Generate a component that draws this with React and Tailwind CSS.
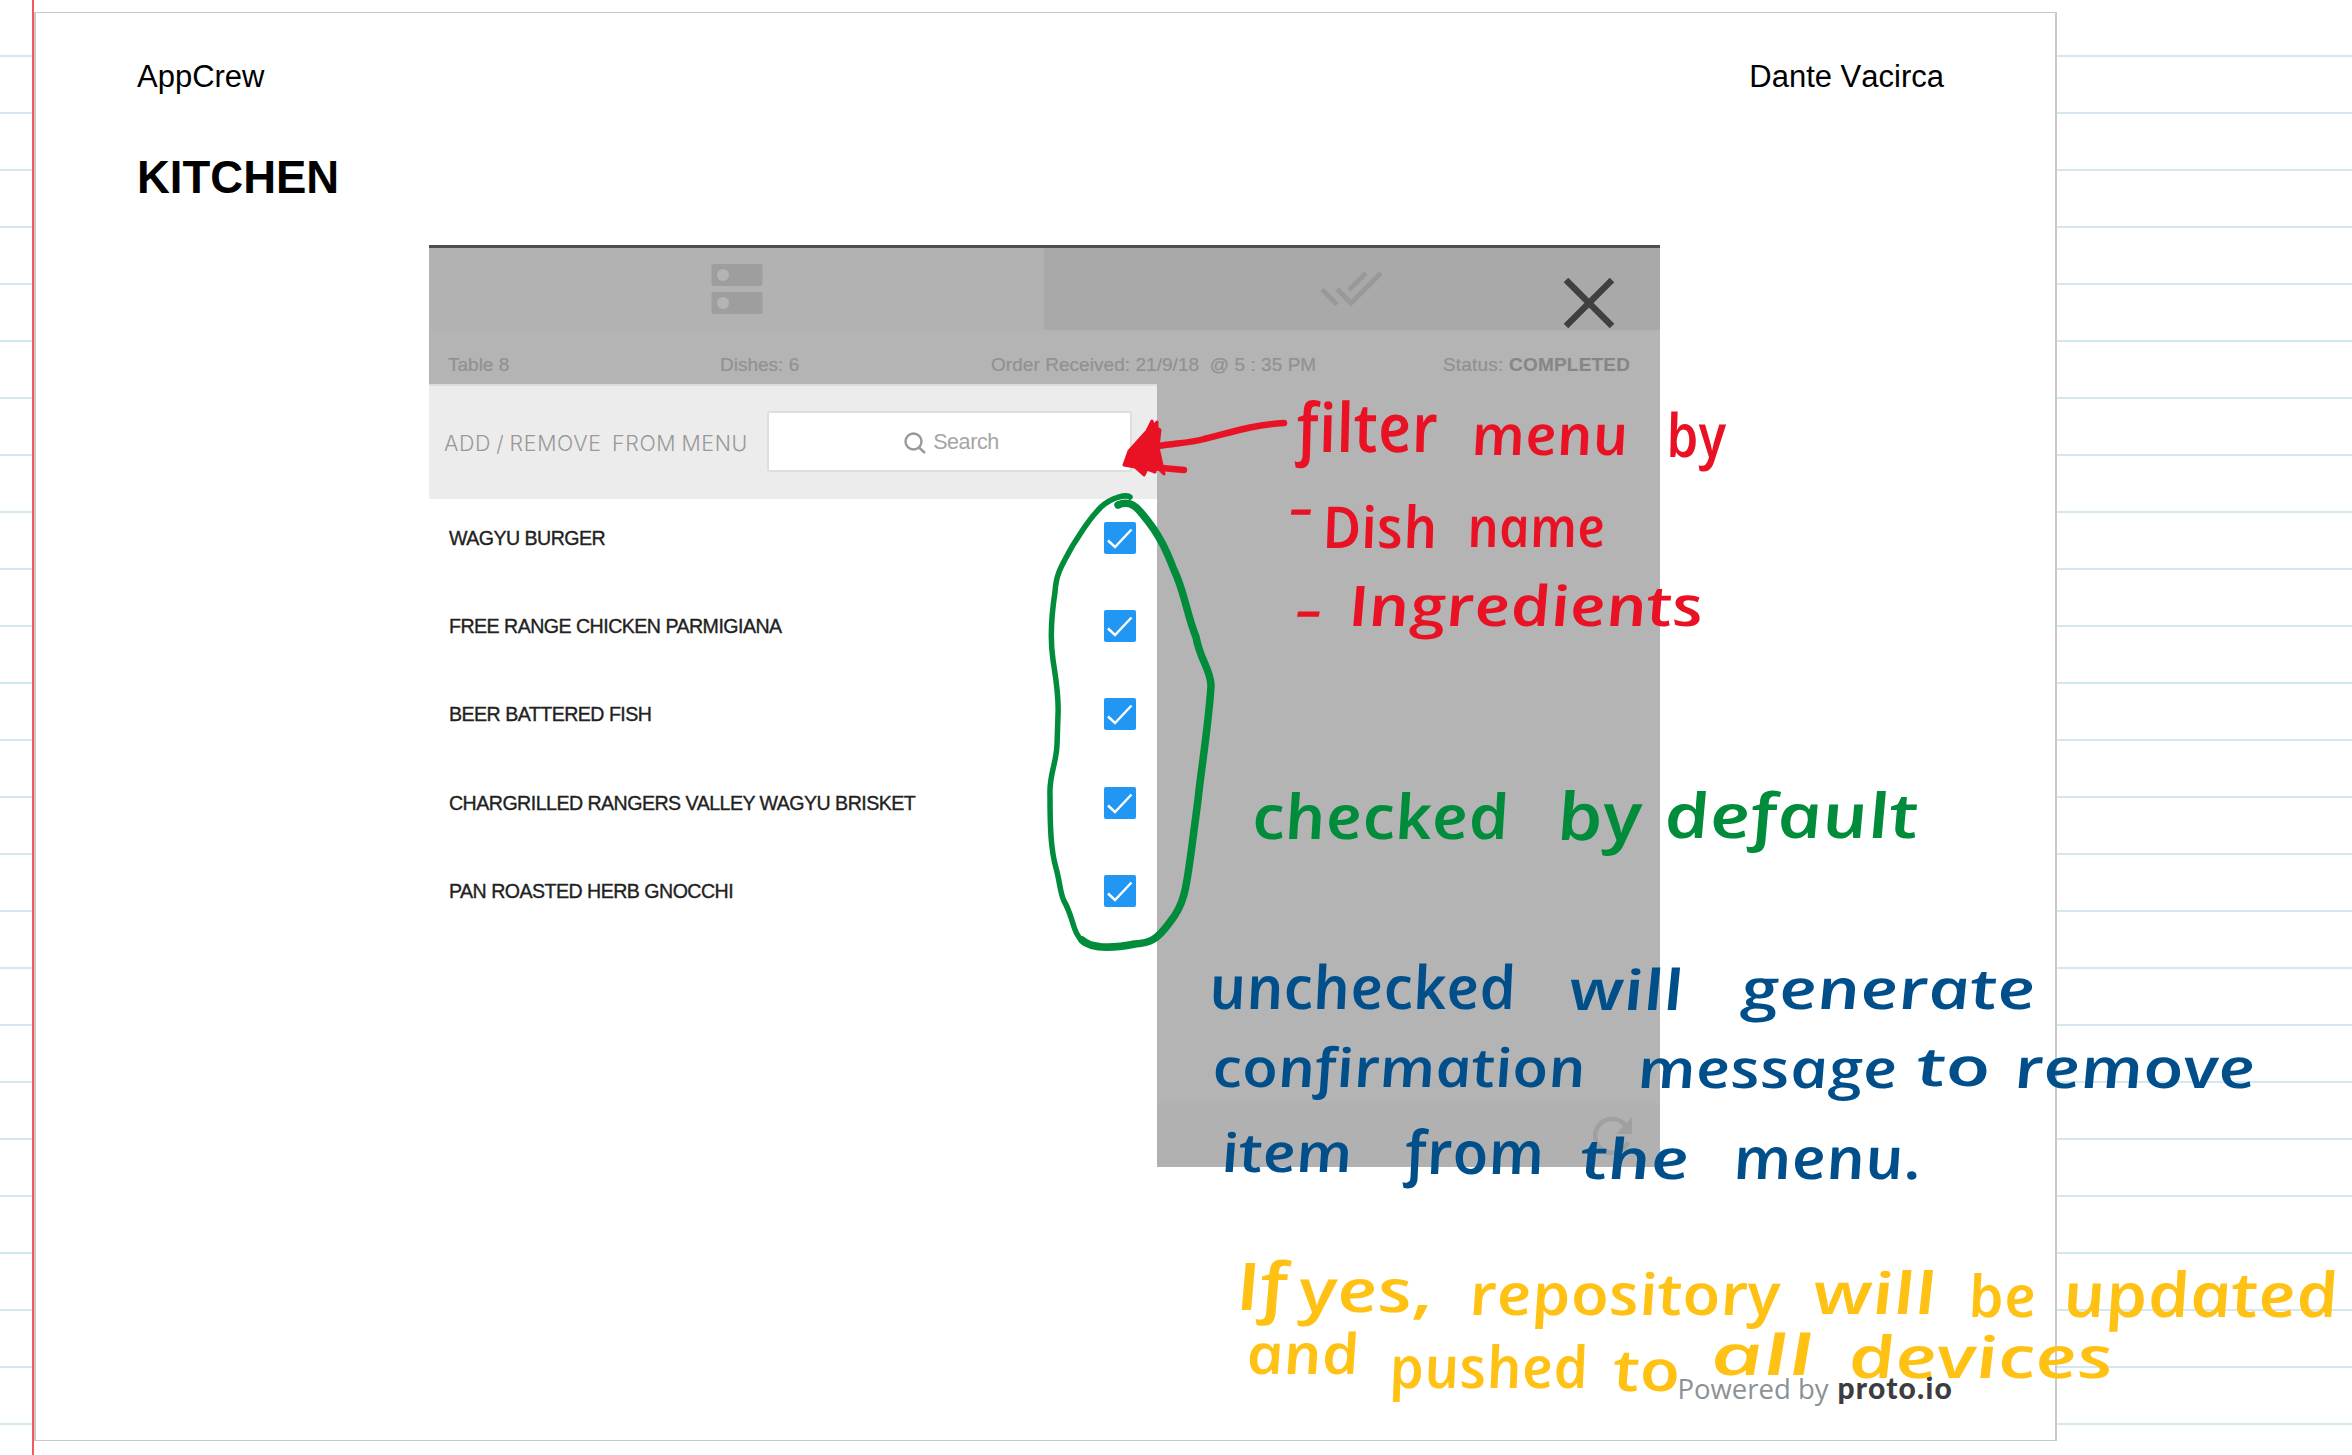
import React from "react";

const dishes = [
  "WAGYU BURGER",
  "FREE RANGE CHICKEN PARMIGIANA",
  "BEER BATTERED FISH",
  "CHARGRILLED RANGERS VALLEY WAGYU BRISKET",
  "PAN ROASTED HERB GNOCCHI",
];

// Handwritten words: [text, left, right, baseline, font size]
const notes = [
  {
    color: "#e81224",
    words: [
      ["filter", 1300, 1441, 452, 68],
      ["menu", 1474, 1631, 455, 56],
      ["by", 1669, 1729, 457, 60],
      ["-", 1291, 1316, 526, 52],
      ["Dish", 1325, 1440, 548, 58],
      ["name", 1470, 1608, 547, 56],
      ["-", 1297, 1325, 628, 52],
      ["Ingredients", 1351, 1706, 626, 56],
    ],
  },
  {
    color: "#008c3a",
    words: [
      ["checked", 1255, 1512, 839, 62],
      ["by", 1560, 1645, 840, 66],
      ["default", 1667, 1921, 838, 62],
    ],
  },
  {
    color: "#004f8b",
    words: [
      ["unchecked", 1212, 1519, 1009, 60],
      ["will", 1572, 1686, 1010, 56],
      ["generate", 1743, 2038, 1009, 56],
      ["confirmation", 1215, 1588, 1087, 54],
      ["message", 1640, 1900, 1088, 54],
      ["to", 1919, 1993, 1086, 54],
      ["remove", 2017, 2258, 1088, 56],
      ["item", 1224, 1355, 1172, 54],
      ["from", 1408, 1547, 1174, 60],
      ["the", 1583, 1692, 1179, 56],
      ["menu.", 1736, 1924, 1179, 58],
    ],
  },
  {
    color: "#ffc114",
    words: [
      ["If", 1239, 1291, 1310, 66],
      ["yes,", 1302, 1436, 1312, 60],
      ["repository", 1472, 1783, 1315, 58],
      ["will", 1816, 1939, 1314, 58],
      ["be", 1971, 2039, 1317, 58],
      ["updated", 2066, 2341, 1317, 62],
      ["and", 1249, 1362, 1374, 56],
      ["pushed", 1392, 1591, 1388, 58],
      ["to", 1616, 1683, 1391, 58],
      ["all", 1713, 1816, 1375, 56],
      ["devices", 1851, 2116, 1378, 58],
    ],
  },
];

function Checkbox() {
  return (
    <svg width="32" height="32" viewBox="0 0 32 32" fill="none" stroke="#fff" strokeWidth="2.4">
      <rect width="32" height="32" rx="2" fill="#2196f3" stroke="none" />
      <path d="M4 18.5 L11 25 L27.5 7.5" />
    </svg>
  );
}

function Tabs() {
  return (
    <div className="flex h-[85px] border-t-[3px] border-[#4f4f4f]">
      <div className="flex w-[615px] justify-center bg-[#b2b2b2] pt-[16px]">
        <svg width="52" height="50" viewBox="0 0 52 50" fill="#9e9e9e">
          <rect x="0.5" y="0" width="51" height="22" rx="2" />
          <rect x="0.5" y="28" width="51" height="22" rx="2" />
          <circle cx="12" cy="11" r="6" fill="#b4b4b4" />
          <circle cx="12" cy="39" r="6" fill="#b4b4b4" />
        </svg>
      </div>
      <div className="flex flex-1 justify-end bg-[#a9a9a9]">
        <svg className="mt-[23px]" width="64" height="36" viewBox="0 0 64 36" fill="none" stroke="#999" strokeWidth="4.8">
          <path d="M2 18.5 L17 33.5" />
          <path d="M17 18 L31 32 L61 2" />
          <path d="M29 19 L46 2" />
        </svg>
        <svg className="ml-[179px] mr-[45px] mt-[30px]" width="52" height="50" viewBox="0 0 52 50" stroke="#404040" strokeWidth="6.4">
          <path d="M3 2 L49 48 M49 2 L3 48" />
        </svg>
      </div>
    </div>
  );
}

function OrderBar() {
  return (
    <div className="flex h-[54px] items-center whitespace-nowrap bg-[#b4b4b4] pl-[19px] pt-[15px] text-[19px] leading-[24px] text-[#919191] [-webkit-text-stroke:0.2px_#919191]">
      <span className="w-[272px]">Table 8</span>
      <span className="w-[271px]">Dishes: 6</span>
      <span className="w-[452px] whitespace-pre tracking-[0.05px]">Order Received: 21/9/18  @ 5 : 35 PM</span>
      <span className="tracking-[0.2px]">
        Status: <b className="text-[#868686]">COMPLETED</b>
      </span>
    </div>
  );
}

function MenuPanel() {
  return (
    <div className="h-full w-[728px] bg-white">
      <div className="flex h-[115px] items-start border-t-2 border-[#dcdcdc] bg-[#ececec] pl-[15px] pt-[25px]">
        <span className="mt-[19px] w-[323px] whitespace-pre font-['Inter'] text-[21.4px] font-light leading-[26px] tracking-[0.65px] text-[#999] [word-spacing:-1.5px]">
          ADD / REMOVE  FROM MENU
        </span>
        <div className="flex h-[61px] w-[365px] items-center justify-center gap-[6px] rounded-[3px] border-2 border-[#dedede] bg-white pl-[3px] pt-[2px] text-[21.5px] tracking-[-0.4px] text-[#a5a5a5]">
          <svg width="24" height="24" viewBox="0 0 24 24" fill="none" stroke="#999" strokeWidth="2.4">
            <circle cx="10.5" cy="10.5" r="8" />
            <path d="M16 16.5 L22 22" />
          </svg>
          Search
        </div>
      </div>
      <div className="flex flex-col gap-[56.2px] pl-[20px] pr-[21px] pt-[23px]">
        {dishes.map((name) => (
          <div key={name} className="flex h-[32px] items-center justify-between">
            <span className="whitespace-nowrap text-[19.6px] leading-[24px] tracking-[-0.53px] text-[#222] [-webkit-text-stroke:0.35px_#222]">
              {name}
            </span>
            <Checkbox />
          </div>
        ))}
      </div>
    </div>
  );
}

function Ink() {
  return (
    <svg
      className="pointer-events-none absolute inset-0"
      width="2352"
      height="1455"
      viewBox="0 0 2352 1455"
      fill="none"
      strokeLinecap="round"
      strokeLinejoin="round"
    >
      <g stroke="#008c3a">
        <path
          strokeWidth="5.5"
          d="M1130 497 C1127 494 1112 497 1101 507 C1086 522 1080 535 1073 545 C1060 568 1056 575 1055 592 C1051 618 1050 640 1053 660 C1056 680 1059 695 1058 715 L1057 745 C1056 765 1049 775 1050 795 C1050 830 1051 850 1056 868 C1060 882 1060 893 1064 901 C1074 918 1072 933 1084 943"
        />
        <path
          strokeWidth="7.5"
          d="M1118 505 C1130 500 1137 507 1143 515 C1160 535 1167 552 1174 570 C1184 590 1187 615 1196 637 C1200 660 1211 670 1211 686 C1208 730 1201 770 1198 800 L1191 853 C1186 890 1184 905 1170 922 C1157 940 1150 943 1135 944 C1110 949 1090 948 1082 940"
        />
      </g>
      <g stroke="#e81224">
        <path strokeWidth="6.5" d="M1284 423 C1250 425 1226 434 1204 439 C1190 443 1177 443 1158 446 M1184 470 L1140 466" />
        <path
          fill="#e81224"
          strokeWidth="3"
          d="M1152 421 L1154 426 L1157 422 L1157 428 L1160 430 L1158 447 L1164 474 L1156 466 L1155 472 L1147 469 L1144 475 L1135 467 L1124 465 L1129 451 L1147 431 Z"
        />
      </g>
      {notes.map(({ color, words }) => (
        <g key={color} fill={color} fontFamily="'Open Sans', 'Noto Sans', sans-serif" fontStyle="italic" fontWeight="600">
          {words.map(([text, left, right, baseline, size]) => (
            <text
              key={text + left}
              transform={`translate(${left} ${baseline}) skewX(10)`}
              fontSize={size}
              textLength={right - left}
              lengthAdjust="spacingAndGlyphs"
            >
              {text}
            </text>
          ))}
        </g>
      ))}
    </svg>
  );
}

export default function App() {
  return (
    <div className="relative h-[1455px] w-[2352px] overflow-hidden bg-white bg-[repeating-linear-gradient(to_bottom,transparent_0,transparent_55px,#d3e8f1_55px,#d3e8f1_57px)] font-['Liberation_Sans',Arial,sans-serif]">
      <div className="h-[12px] w-full bg-white" />
      <div className="absolute left-[32px] top-0 h-full w-[2px] bg-[#f05a5a]" />
      <main className="ml-[34px] h-[1429px] w-[2023px] border border-x-2 border-[#c9c9cc] bg-white">
        <header className="flex justify-between pl-[101px] pr-[111px] pt-[46px] text-[31px] leading-[36px] text-black">
          <span>AppCrew</span>
          <span className="[font-kerning:none]">Dante Vacirca</span>
        </header>
        <h1 className="pl-[101px] pt-[57px] text-[45.5px] font-bold leading-[52px] text-black">KITCHEN</h1>
        <section className="ml-[393px] mt-[41px] h-[922px] w-[1231px]">
          <Tabs />
          <OrderBar />
          <div className="flex h-[783px]">
            <MenuPanel />
            <div className="flex flex-1 flex-col justify-end bg-[#b4b4b4]">
              <div className="flex h-[64px] justify-end bg-[#b1b1b1] pr-[27px] pt-[12px]">
                <svg width="42" height="42" viewBox="0 0 42 42" fill="none" stroke="#a0a0a0" strokeWidth="4.5">
                  <path d="M35 11 A17 17 0 1 0 37 27" />
                  <path d="M41 2 V19 H25 Z" fill="#a0a0a0" stroke="none" />
                </svg>
              </div>
            </div>
          </div>
        </section>
        <footer className="mt-[202px] flex items-baseline justify-end gap-[9px] whitespace-nowrap pr-[102px] leading-[36px]">
          <span className="font-['Open_Sans'] text-[27.5px] text-[#8b9296]">Powered by</span>
          <span className="font-['Lato'] text-[30px] font-black tracking-[1.2px] text-[#3d3d3f]">proto.io</span>
        </footer>
      </main>
      <Ink />
    </div>
  );
}
